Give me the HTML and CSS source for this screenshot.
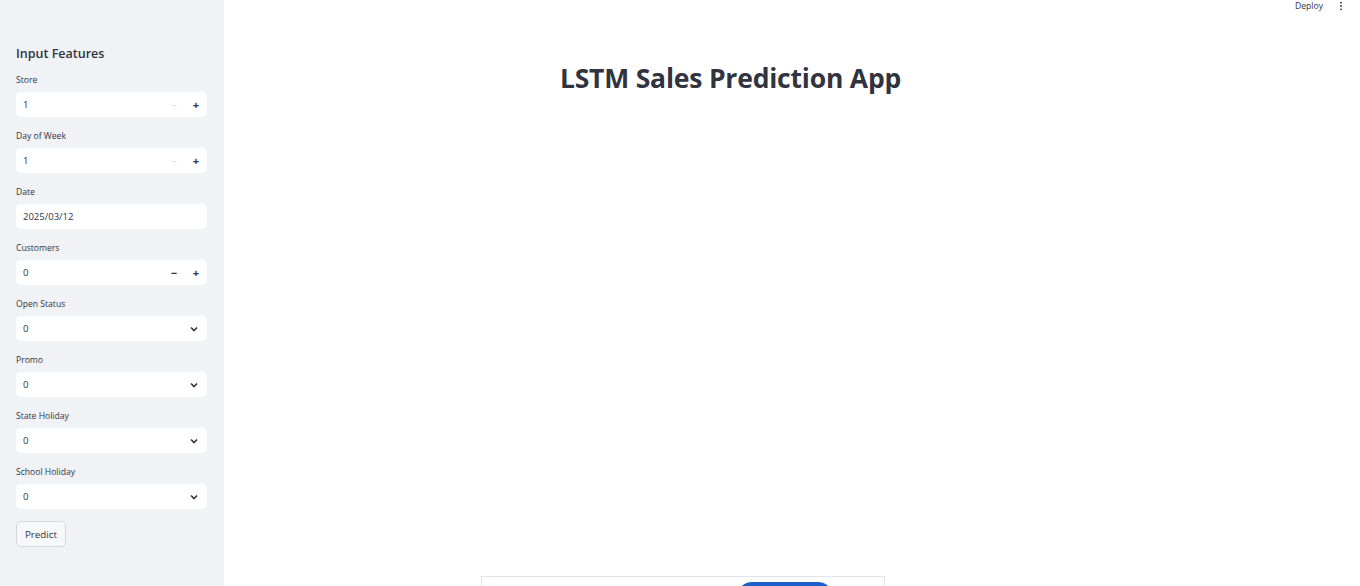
FILE: index.html
```html
<!DOCTYPE html>
<html>
<head>
<meta charset="utf-8">
<link rel="stylesheet" href="styles.css">
</head>
<body>
<div class="app">
  <aside class="sidebar">
    <h2 class="side-title">Input Features</h2>
    <div class="field">
      <div class="label">Store</div>
      <div class="input">
        <span class="val">1</span>
        <span class="step minus disabled">&minus;</span>
        <span class="step plus">+</span>
      </div>
    </div>
    <div class="field">
      <div class="label">Day of Week</div>
      <div class="input">
        <span class="val">1</span>
        <span class="step minus disabled">&minus;</span>
        <span class="step plus">+</span>
      </div>
    </div>
    <div class="field">
      <div class="label">Date</div>
      <div class="input"><span class="val">2025/03/12</span></div>
    </div>
    <div class="field">
      <div class="label">Customers</div>
      <div class="input">
        <span class="val">0</span>
        <span class="step minus">&minus;</span>
        <span class="step plus">+</span>
      </div>
    </div>
    <div class="field">
      <div class="label">Open Status</div>
      <div class="input select"><span class="val">0</span><svg class="chev" viewBox="0 0 10 10"><path d="M2 3.5 L5 6.5 L8 3.5" /></svg></div>
    </div>
    <div class="field">
      <div class="label">Promo</div>
      <div class="input select"><span class="val">0</span><svg class="chev" viewBox="0 0 10 10"><path d="M2 3.5 L5 6.5 L8 3.5" /></svg></div>
    </div>
    <div class="field">
      <div class="label">State Holiday</div>
      <div class="input select"><span class="val">0</span><svg class="chev" viewBox="0 0 10 10"><path d="M2 3.5 L5 6.5 L8 3.5" /></svg></div>
    </div>
    <div class="field">
      <div class="label">School Holiday</div>
      <div class="input select"><span class="val">0</span><svg class="chev" viewBox="0 0 10 10"><path d="M2 3.5 L5 6.5 L8 3.5" /></svg></div>
    </div>
    <button class="btn">Predict</button>
  </aside>
  <main class="main">
    <header class="toolbar">
      <span class="deploy">Deploy</span>
      <svg class="kebab" viewBox="0 0 4 12"><circle cx="2" cy="2" r="1.1"/><circle cx="2" cy="6" r="1.1"/><circle cx="2" cy="10" r="1.1"/></svg>
    </header>
    <section class="block">
      <h1 class="title">LSTM Sales Prediction App</h1>
      <div class="spacer"></div>
      <div class="frame">
        <div class="pill"></div>
      </div>
    </section>
  </main>
</div>
</body>
</html>
```
FILE: styles.css
```css
* { box-sizing: border-box; }
html, body { margin: 0; padding: 0; height: 586px; overflow: hidden; }
body { font-family: "Source Sans Pro", "Open Sans", "Liberation Sans", sans-serif; color: #31333f; background: #fff; }
.app { display: flex; height: 586px; overflow: hidden; }
.sidebar { width: 224px; flex: none; background: #f0f2f6; padding: 45px 17px 0 16px; display: flex; flex-direction: column; gap: 13px; }
.side-title { margin: 0 0 -1px 0; font-size: 12.5px; font-weight: 600; line-height: 17px; color: #31333f; }
.field { display: flex; flex-direction: column; gap: 5px; }
.label { font-size: 8.6px; line-height: 13px; color: #31333f; }
.input { height: 25px; background: #fff; border-radius: 5px; display: flex; align-items: center; padding: 0 0 0 7px; font-size: 9.5px; color: #31333f; }
.input .val { flex: 1; }
.step { width: 22px; text-align: center; font-size: 11px; font-weight: 700; color: #31333f; }
.step.disabled { color: #d6d8dd; font-weight: 400; }
.select { padding-right: 8px; }
.chev { width: 10px; height: 10px; fill: none; stroke: #31333f; stroke-width: 1.6; }
.btn { align-self: flex-start; height: 26px; width: 50px; padding: 0; margin-top: -1px; font-family: inherit; font-size: 9.8px; color: #31333f; background: #f7f8fa; border: 1px solid #d3d6dc; border-radius: 5px; }
.main { flex: 1; display: flex; flex-direction: column; position: relative; }
.toolbar { height: 14px; display: flex; justify-content: flex-end; align-items: center; gap: 16px; padding: 0 17px 0 0; }
.deploy { font-size: 8.6px; color: #31333f; line-height: 12px; }
.kebab { width: 4px; height: 10px; fill: #31333f; }
.block { width: 499px; margin-left: 257px; display: flex; flex-direction: column; }
.title { margin: 48px 0 0 0; text-align: center; font-size: 26.5px; font-weight: 700; line-height: 36px; color: #31333f; letter-spacing: -0.2px; }
.spacer { height: 480px; }
.frame { width: 404px; height: 10px; border: 1px solid #e1e4ea; border-bottom: none; position: relative; overflow: hidden; }
.pill { position: absolute; left: 255px; top: 5px; width: 96px; height: 30px; border-radius: 15px; background: #1c5fcc; }
```
